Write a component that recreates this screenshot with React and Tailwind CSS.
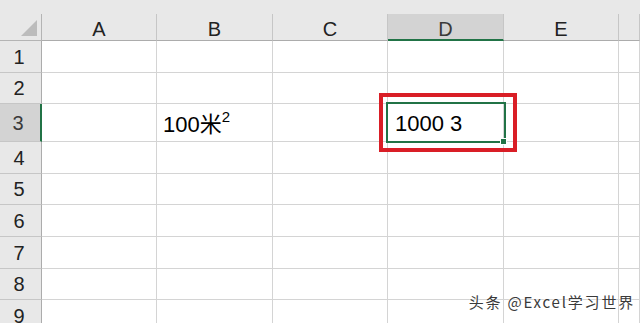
const COLS = [
    { key: 'A', w: 'w-[115px]' },
    { key: 'B', w: 'w-[116px]' },
    { key: 'C', w: 'w-[115px]' },
    { key: 'D', w: 'w-[116px]' },
    { key: 'E', w: 'w-[115px]' },
    { key: 'F', w: 'flex-1' },
]

const ROWS = [
    { n: 1, h: 'h-[32px]' },
    { n: 2, h: 'h-[31px]' },
    { n: 3, h: 'h-[38px]' },
    { n: 4, h: 'h-[32px]' },
    { n: 5, h: 'h-[31px]' },
    { n: 6, h: 'h-[32px]' },
    { n: 7, h: 'h-[32px]' },
    { n: 8, h: 'h-[31px]' },
    { n: 9, h: 'h-[32px]' },
]

const Cell = ({ row, col }) => {
    if (row === 3 && col === 'B') {
        return (
            <div className="h-full flex items-end pl-[6px] pb-[5px] text-[22px] leading-[22px] text-black whitespace-nowrap">
                <span>
                    100米<sup className="text-[15px] leading-none relative top-[-10px] align-baseline">2</sup>
                </span>
            </div>
        )
    }
    if (row === 3 && col === 'D') {
        return (
            <>
                <div className="h-full flex items-end pl-[7px] pb-[6px] text-[22px] leading-[22px] text-black whitespace-nowrap">
                    1000 3
                </div>
                {/* selected cell */}
                <div className="absolute left-[-2px] top-[-2px] right-[-3px] bottom-[-2px] border-2 border-[#217346] z-10" />
                <div className="absolute right-[-4px] bottom-[-4px] w-[7px] h-[7px] bg-[#217346] border border-white z-20" />
                {/* annotation */}
                <div className="absolute left-[-9px] top-[-11px] right-[-14px] bottom-[-11px] border-4 border-[#d91e26] z-30" />
            </>
        )
    }
    return null
}

export default function App() {
    return (
        <div className="relative w-[640px] h-[323px] overflow-hidden bg-white font-['Liberation_Sans','Noto_Sans_CJK_SC',sans-serif]">
            <div className="h-[14px] bg-[#e8e8e8]" />

            {/* column headers */}
            <div className="flex h-[27px] bg-[#e8e8e8] text-[20px] leading-none text-[#222]">
                <div className="w-[42px] shrink-0 border-r border-b border-[#b4b4b4] flex items-end justify-end pr-[3px] pb-[3px]">
                    <svg width="18" height="17" viewBox="0 0 18 17">
                        <polygon points="1,16 17,16 17,0" fill="#bcbcbc" />
                    </svg>
                </div>
                {COLS.map((c) => (
                    <div
                        key={c.key}
                        className={
                            c.key === 'D'
                                ? `${c.w} shrink-0 flex items-center justify-center pt-[4px] bg-[#d3d3d3] border-r border-[#c6c6c6] border-b-2 border-b-[#217346] text-[#3a3a3a]`
                                : `${c.w} shrink-0 flex items-center justify-center pt-[4px] border-r border-[#c6c6c6] border-b border-b-[#acacac]`
                        }
                    >
                        {c.key === 'F' ? '' : c.key}
                    </div>
                ))}
            </div>

            {/* rows */}
            {ROWS.map((r) => (
                <div key={r.n} className={`flex ${r.h}`}>
                    <div
                        className={
                            r.n === 3
                                ? 'w-[42px] shrink-0 flex items-center justify-center pr-[4px] bg-[#d3d3d3] border-b border-[#c6c6c6] border-r-2 border-r-[#217346] text-[20px] leading-none text-[#3a3a3a]'
                                : 'w-[42px] shrink-0 flex items-center justify-center pr-[3px] bg-[#e8e8e8] border-b border-[#c6c6c6] border-r border-r-[#acacac] text-[20px] leading-none text-[#222]'
                        }
                    >
                        {r.n}
                    </div>
                    {COLS.map((c) => (
                        <div key={c.key} className={`${c.w} shrink-0 relative border-r border-b border-[#d4d4d4]`}>
                            <Cell row={r.n} col={c.key} />
                        </div>
                    ))}
                </div>
            ))}

            {/* watermark */}
            <div className="absolute right-[5px] top-[292px] text-[15px] leading-[20px] tracking-[1.8px] text-[#3a3a3a] whitespace-nowrap font-['Noto_Sans_CJK_SC',sans-serif] [text-shadow:0_0_2px_#fff,0_0_2px_#fff]">
                头条 @Excel学习世界
            </div>
        </div>
    )
}
